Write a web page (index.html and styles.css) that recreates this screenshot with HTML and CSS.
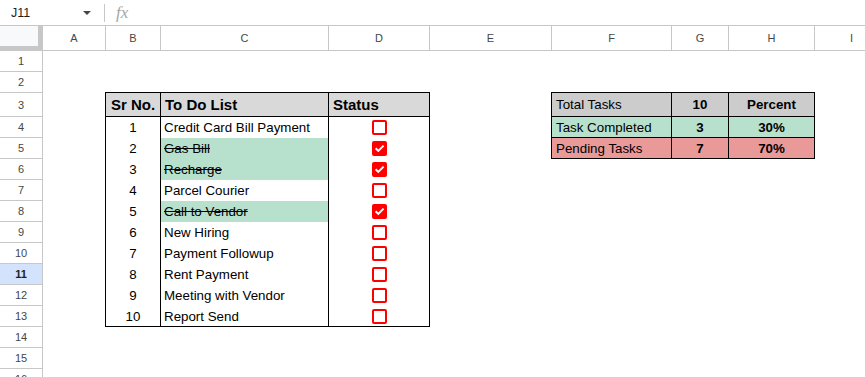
FILE: index.html
```html
<!DOCTYPE html>
<html lang="en">
<head>
<meta charset="utf-8">
<title>To Do List</title>
<link rel="stylesheet" href="styles.css">
</head>
<body>
<div class="app">
  <header class="formula-bar">
    <div class="namebox"><span class="ref">J11</span><span class="caret"></span></div>
    <span class="divider"></span>
    <span class="fx">fx</span>
  </header>
  <div class="sheet">
    <div class="corner"></div>
    <div class="col-heads">
      <div class="ch w-a">A</div>
      <div class="ch w-b">B</div>
      <div class="ch w-c">C</div>
      <div class="ch w-d">D</div>
      <div class="ch w-e">E</div>
      <div class="ch w-f">F</div>
      <div class="ch w-g">G</div>
      <div class="ch w-h">H</div>
      <div class="ch w-i">I</div>
    </div>
    <div class="row-heads">
      <div class="rh">1</div>
      <div class="rh">2</div>
      <div class="rh tall">3</div>
      <div class="rh">4</div>
      <div class="rh">5</div>
      <div class="rh">6</div>
      <div class="rh">7</div>
      <div class="rh">8</div>
      <div class="rh">9</div>
      <div class="rh">10</div>
      <div class="rh sel">11</div>
      <div class="rh">12</div>
      <div class="rh">13</div>
      <div class="rh">14</div>
      <div class="rh">15</div>
      <div class="rh">16</div>
    </div>
    <div class="cells">
      <div class="todo">
        <div class="th b center">Sr No.</div>
        <div class="th c">To Do List</div>
        <div class="th">Status</div>

        <div class="td b center">1</div>
        <div class="td c">Credit Card Bill Payment</div>
        <div class="td center"><span class="cb"></span></div>

        <div class="td b center">2</div>
        <div class="td c done">Gas Bill</div>
        <div class="td center"><span class="cb on"><svg viewBox="0 0 11 11" width="11" height="11"><path d="M1.6 5.3 L4.3 7.9 L9.6 2.6" /></svg></span></div>

        <div class="td b center">3</div>
        <div class="td c done">Recharge</div>
        <div class="td center"><span class="cb on"><svg viewBox="0 0 11 11" width="11" height="11"><path d="M1.6 5.3 L4.3 7.9 L9.6 2.6" /></svg></span></div>

        <div class="td b center">4</div>
        <div class="td c">Parcel Courier</div>
        <div class="td center"><span class="cb"></span></div>

        <div class="td b center">5</div>
        <div class="td c done">Call to Vendor</div>
        <div class="td center"><span class="cb on"><svg viewBox="0 0 11 11" width="11" height="11"><path d="M1.6 5.3 L4.3 7.9 L9.6 2.6" /></svg></span></div>

        <div class="td b center">6</div>
        <div class="td c">New Hiring</div>
        <div class="td center"><span class="cb"></span></div>

        <div class="td b center">7</div>
        <div class="td c">Payment Followup</div>
        <div class="td center"><span class="cb"></span></div>

        <div class="td b center">8</div>
        <div class="td c">Rent Payment</div>
        <div class="td center"><span class="cb"></span></div>

        <div class="td b center">9</div>
        <div class="td c">Meeting with Vendor</div>
        <div class="td center"><span class="cb"></span></div>

        <div class="td b center">10</div>
        <div class="td c">Report Send</div>
        <div class="td center"><span class="cb"></span></div>
      </div>

      <div class="summary">
        <div class="sc f total">Total Tasks</div>
        <div class="sc g total bold center">10</div>
        <div class="sc total bold center">Percent</div>

        <div class="sc f done-row">Task Completed</div>
        <div class="sc g done-row bold center">3</div>
        <div class="sc done-row bold center">30%</div>

        <div class="sc f pend-row last">Pending Tasks</div>
        <div class="sc g pend-row bold center last">7</div>
        <div class="sc pend-row bold center last">70%</div>
      </div>
    </div>
  </div>
</div>
</body>
</html>
```

FILE: styles.css
```css
* {
  box-sizing: border-box;
}

html,
body {
  margin: 0;
  padding: 0;
}

body {
  width: 865px;
  height: 377px;
  overflow: hidden;
  background: #ffffff;
  font-family: "Liberation Sans", Arial, sans-serif;
  color: #000000;
}

/* ---------- formula bar ---------- */
.formula-bar {
  display: flex;
  align-items: center;
  height: 26px;
  border-bottom: 1px solid #c7c7c7;
}

.namebox {
  width: 97px;
  display: flex;
  align-items: center;
  justify-content: space-between;
  padding: 0 6px 0 11px;
  font-size: 12.5px;
  color: #1f1f1f;
}

.caret {
  width: 0;
  height: 0;
  border-left: 4px solid transparent;
  border-right: 4px solid transparent;
  border-top: 4px solid #444746;
}

.divider {
  width: 1px;
  height: 18px;
  margin-left: 7px;
  background: #c7c7c7;
}

.fx {
  margin-left: 11px;
  font-family: "Liberation Serif", serif;
  font-style: italic;
  font-size: 17px;
  color: #a6a6a6;
  line-height: 1;
}

/* ---------- sheet frame ---------- */
.sheet {
  display: grid;
  grid-template-columns: 43px max-content;
  grid-template-rows: 25px auto;
}

.corner {
  background: #f8f9fa;
  border-right: 5px solid #c7c7c7;
  border-bottom: 5px solid #c7c7c7;
}

.col-heads {
  display: flex;
}

.ch {
  flex: none;
  height: 25px;
  display: flex;
  align-items: center;
  justify-content: center;
  border-right: 1px solid #c7c7c7;
  border-bottom: 1px solid #c7c7c7;
  font-size: 11px;
  color: #444746;
}

.w-a { width: 63px; }
.w-b { width: 55px; }
.w-c { width: 168px; }
.w-d { width: 101px; }
.w-e { width: 122px; }
.w-f { width: 120px; }
.w-g { width: 57px; }
.w-h { width: 86px; }
.w-i { width: 74px; }

.row-heads {
  display: flex;
  flex-direction: column;
}

.rh {
  height: 21px;
  display: flex;
  align-items: center;
  justify-content: center;
  border-right: 1px solid #c7c7c7;
  border-bottom: 1px solid #c7c7c7;
  font-size: 11px;
  color: #444746;
}

.rh.tall {
  height: 24px;
}

.rh.sel {
  background: #d3e3fd;
  font-weight: bold;
  color: #1f1f1f;
}

/* ---------- cell area ---------- */
.cells {
  display: grid;
  grid-template-columns: 63px 55px 168px 101px 122px 120px 57px 86px 74px;
  grid-template-rows: 21px 21px 24px repeat(13, 21px);
}

.center {
  justify-content: center;
}

.bold {
  font-weight: bold;
}

/* to do table */
.todo {
  grid-column: 2 / 5;
  grid-row: 3 / 14;
  margin: -1px 0 0 -1px;
  border: 1px solid #000000;
  display: grid;
  grid-template-columns: 55px 168px 1fr;
  grid-template-rows: 24px repeat(9, 21px) 20px;
  font-size: 13.33px;
}

.th {
  display: flex;
  align-items: center;
  padding: 0 4px;
  background: #d9d9d9;
  border-bottom: 1px solid #000000;
  font-size: 15px;
  font-weight: bold;
}

.td {
  display: flex;
  align-items: center;
  padding: 0 3px;
  white-space: nowrap;
}

.b,
.c {
  border-right: 1px solid #000000;
}

.done {
  background: #b7e1cd;
  text-decoration: line-through;
}

.cb {
  display: flex;
  align-items: center;
  justify-content: center;
  width: 15px;
  height: 15px;
  border: 2px solid #ff0000;
  border-radius: 2px;
  background: #ffffff;
}

.cb.on {
  background: #ff0000;
}

.cb svg path {
  fill: none;
  stroke: #ffffff;
  stroke-width: 1.9;
}

/* summary table */
.summary {
  grid-column: 6 / 9;
  grid-row: 3 / 6;
  margin: -1px 0 0 -1px;
  border: 1px solid #000000;
  display: grid;
  grid-template-columns: 120px 57px 1fr;
  grid-template-rows: 24px 21px 1fr;
  font-size: 13.33px;
}

.sc {
  display: flex;
  align-items: center;
  padding: 0 4px;
  border-bottom: 1px solid #000000;
  white-space: nowrap;
}

.sc.last {
  border-bottom: none;
}

.f,
.g {
  border-right: 1px solid #000000;
}

.total {
  background: #cccccc;
}

.done-row {
  background: #b7e1cd;
}

.pend-row {
  background: #ea9999;
}
```
